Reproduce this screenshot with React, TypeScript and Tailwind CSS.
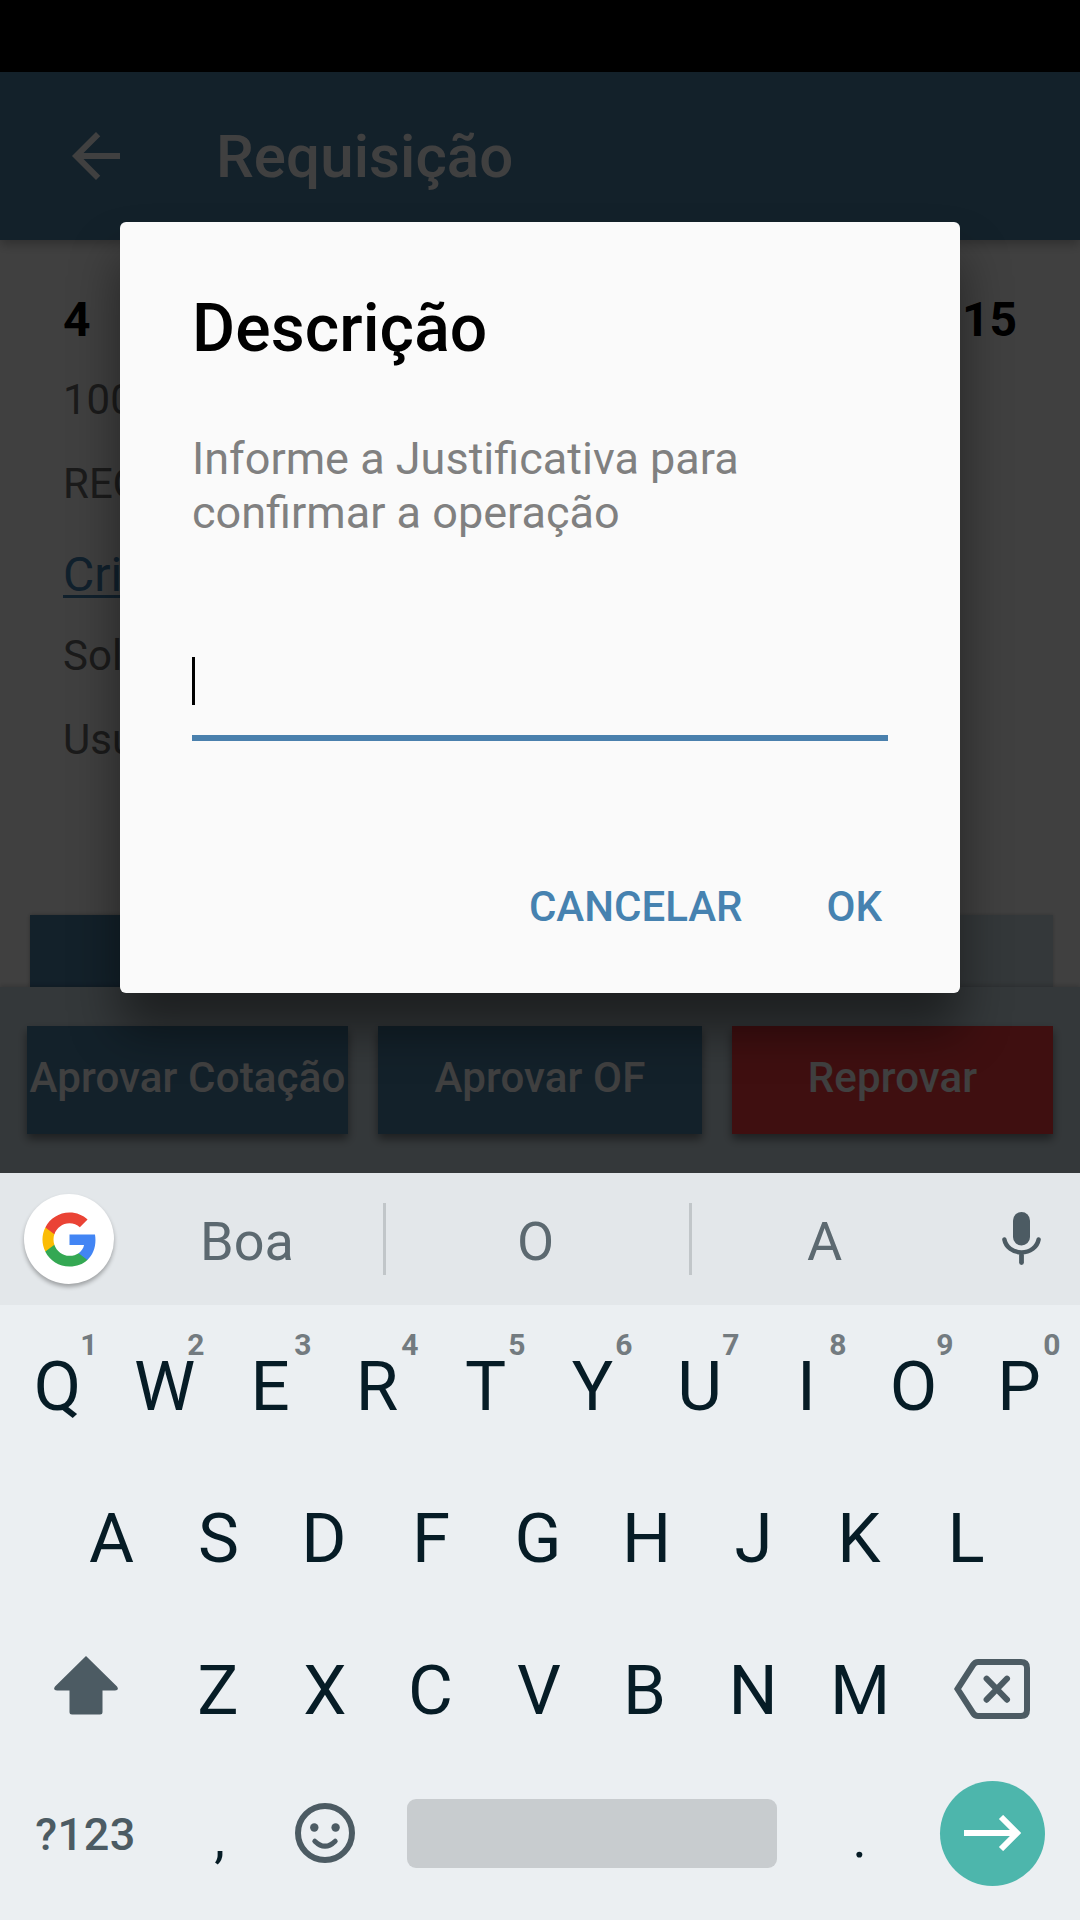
import React from 'react';
import clsx from 'clsx';

const topRow = ['Q', 'W', 'E', 'R', 'T', 'Y', 'U', 'I', 'O', 'P'];
const homeRow = ['A', 'S', 'D', 'F', 'G', 'H', 'J', 'K', 'L'];
const bottomRow = ['Z', 'X', 'C', 'V', 'B', 'N', 'M'];

// Letters with a heavier left bearing sit slightly off centre
const nudged = 'ERDFKLPBCG';

function Key({ label, hint }: { label: string; hint?: string }) {
  return (
    <div
      className={clsx(
        'relative flex h-[152px] w-[107px] shrink-0 items-center justify-center text-[69px] leading-none text-[#061c26]',
        nudged.includes(label) ? 'pr-[4px]' : 'pr-px'
      )}
    >
      {label}
      {hint && (
        <span className="absolute right-[14px] top-[24px] text-[30px] font-bold leading-[22px] text-[#737b80]">
          {hint}
        </span>
      )}
    </div>
  );
}

function GoogleLogo() {
  return (
    <svg width="59" height="59" viewBox="0 0 24 24">
      <path fill="#4285F4" d="M22.56 12.25c0-.78-.07-1.53-.2-2.25H12v4.26h5.92c-.26 1.37-1.04 2.53-2.21 3.31v2.77h3.57c2.08-1.92 3.28-4.74 3.28-8.09z" />
      <path fill="#34A853" d="M12 23c2.97 0 5.46-.98 7.28-2.66l-3.57-2.77c-.98.66-2.23 1.06-3.71 1.06-2.86 0-5.29-1.93-6.16-4.53H2.18v2.84C3.99 20.53 7.7 23 12 23z" />
      <path fill="#FBBC05" d="M5.84 14.09c-.22-.66-.35-1.36-.35-2.09s.13-1.43.35-2.09V7.07H2.18C1.43 8.55 1 10.22 1 12s.43 3.45 1.18 4.93l2.85-2.22.81-.62z" />
      <path fill="#EA4335" d="M12 5.38c1.62 0 3.06.56 4.21 1.64l3.15-3.15C17.45 2.09 14.97 1 12 1 7.7 1 3.99 3.47 2.18 7.07l3.66 2.84c.87-2.6 3.3-4.53 6.16-4.53z" />
    </svg>
  );
}

function RequisitionPage() {
  return (
    <div className="flex h-full flex-col bg-white">
      <div className="h-[72px] shrink-0 bg-black" />

      {/* App bar */}
      <header className="z-10 flex h-[168px] shrink-0 items-center bg-[#4c82a8] pl-[60px] text-white shadow-[0_5px_10px_rgba(0,0,0,0.25)]">
        <svg width="72" height="72" viewBox="0 0 24 24" fill="currentColor">
          <path d="M20 11H7.83l5.59-5.59L12 4l-8 8 8 8 1.41-1.41L7.83 13H20v-2z" />
        </svg>
        <h1 className="ml-[84px] pt-[2px] text-[60px] font-medium leading-none tracking-[0.1px]">Requisição</h1>
      </header>

      {/* Requisition details */}
      <main className="flex-1 px-[63px] pt-[50px] text-[42px] text-[#6e6e6e]">
        <div className="mb-2 flex h-[60px] items-center justify-between text-[48px] font-bold text-black">
          <span>4</span>
          <span>15</span>
        </div>
        <p className="leading-[84px]">100</p>
        <p className="leading-[84px]">REQ</p>
        <p className="text-[48px] leading-[98px] text-[#4682b4] underline decoration-[3px] underline-offset-[4px]">Cri</p>
        <p className="leading-[63px]">Sol</p>
        <p className="leading-[105px]">Usu</p>
      </main>

      <div className="mx-[27px] flex h-[72px] shrink-0 pl-[3px]">
        <div className="flex-1 bg-[#4c82a8] shadow-[0_0_4px_rgba(0,0,0,0.3)]" />
        <div className="flex-1 bg-[#d0dde5] shadow-[0_0_4px_rgba(0,0,0,0.2)]" />
      </div>

      {/* Actions */}
      <footer className="flex h-[186px] shrink-0 gap-[30px] bg-[#d0dfe7] px-[27px] pt-[39px] text-[42px] font-medium tracking-[0.15px] text-white shadow-[0_-2px_4px_rgba(0,0,0,0.15)]">
        <div className="flex h-[108px] w-[321px] items-center justify-center whitespace-nowrap bg-[#4c82a8] pb-1.5 shadow-[0_5px_9px_rgba(0,0,0,0.45)]">
          Aprovar Cotação
        </div>
        <div className="flex h-[108px] w-[324px] items-center justify-center bg-[#4c82a8] pb-1.5 shadow-[0_5px_9px_rgba(0,0,0,0.45)]">
          Aprovar OF
        </div>
        <div className="flex h-[108px] w-[321px] items-center justify-center bg-[#fa3e42] pb-1.5 shadow-[0_5px_9px_rgba(0,0,0,0.45)]">
          Reprovar
        </div>
      </footer>
    </div>
  );
}

function JustificationDialog() {
  return (
    <div className="absolute left-[120px] top-[222px] flex h-[771px] w-[840px] flex-col rounded-md bg-[#fafafa] px-[72px] pt-[66px] shadow-[0_36px_50px_rgba(0,0,0,0.45)]">
      <h2 className="text-[66px] font-medium leading-[81px] tracking-[0.1px] text-black">Descrição</h2>
      <p className="mt-[63px] text-[45px] leading-[54px] text-[#808080]">
        Informe a Justificativa para confirmar a operação
      </p>
      <div className="mt-[117px] h-[84px] border-b-[6px] border-[#4a80ad]">
        <div className="h-12 w-[3px] bg-black" />
      </div>
      <div className="mt-[141px] flex justify-end gap-[84px] pr-[6px] text-[42px] font-medium leading-[50px] text-[#4682b0]">
        <span>CANCELAR</span>
        <span>OK</span>
      </div>
    </div>
  );
}

function Keyboard() {
  return (
    <div className="h-[747px] bg-[#ebeff2]">
      {/* Suggestions */}
      <div className="flex h-[132px] items-center bg-[#e3e7ea] text-[54px] leading-[60px] text-[#5c6970]">
        <div className="w-[111px] pl-6">
          <div className="flex h-[90px] w-[90px] items-center justify-center rounded-full bg-white shadow-[0_3px_4px_rgba(0,0,0,0.3)]">
            <GoogleLogo />
          </div>
        </div>
        <div className="w-[272px] pt-[5px] text-center">Boa</div>
        <div className="h-[72px] w-[3px] bg-[#c1c6c9]" />
        <div className="w-[303px] pr-[4px] pt-[5px] text-center">O</div>
        <div className="h-[72px] w-[3px] bg-[#c1c6c9]" />
        <div className="w-[265px] pt-[5px] text-center">A</div>
        <div className="flex flex-1 justify-center pb-0.5 pl-1.5">
          <svg width="39" height="53" viewBox="0 0 39 53" fill="none" stroke="#4c5b63" strokeLinecap="round">
            <rect x="11" y="0" width="17" height="33.5" rx="8.5" fill="#4c5b63" stroke="none" />
            <path d="M2.4 27.5a17.3 15.2 0 0 0 34.2 0" strokeWidth="4.4" />
            <path d="M19.5 43v7.5" strokeWidth="4.8" />
          </svg>
        </div>
      </div>

      {/* Letters */}
      <div className="flex justify-center pr-px pt-[5px]">
        {topRow.map((k, i) => (
          <Key key={k} label={k} hint={String((i + 1) % 10)} />
        ))}
      </div>
      <div className="flex justify-center">
        {homeRow.map((k) => (
          <Key key={k} label={k} />
        ))}
      </div>
      <div className="flex items-center">
        <div className="flex w-[165px] justify-center pb-[9px] pl-[7px]">
          <svg width="64" height="59" viewBox="0 0 64 59" fill="#4c5b63">
            <path d="M32 0L63 30.5q2.500 4-2 4H48.500V56q0 2.500-2.500 2.500H18q-2.500 0-2.500-2.500V34.500H3q-4.500 0-2-4z" />
          </svg>
        </div>
        {bottomRow.map((k) => (
          <Key key={k} label={k} />
        ))}
        <div className="flex flex-1 justify-center pb-0.5 pr-[10px]">
          <svg width="76" height="60" viewBox="0 0 76 60" fill="none" stroke="#4c5b63" strokeWidth="6">
            <path d="M3.500 30L19 6q2-3 5-3h43q6 0 6 6v42q0 6-6 6H24q-3 0-5-3z" />
            <path d="M32.600 19.700l20.400 21M53 19.700l-20.400 21" strokeLinecap="round" />
          </svg>
        </div>
      </div>

      <div className="flex h-[134px] items-center leading-none">
        <div className="w-[165px] pl-[6px] pt-[3px] text-center text-[45px] font-medium tracking-[0.5px] text-[#4c5b63]">?123</div>
        <div className="w-[107px] pl-[2px] pt-[11px] text-center text-[54px] text-[#061c26]">,</div>
        <div className="flex w-[107px] justify-center pr-[2px]">
          <svg width="60" height="60" viewBox="0 0 60 60" fill="none" stroke="#4c5b63">
            <circle cx="30" cy="30" r="27" strokeWidth="6" />
            <circle cx="19.300" cy="24.500" r="4.200" fill="#4c5b63" stroke="none" />
            <circle cx="40.600" cy="24.500" r="4.200" fill="#4c5b63" stroke="none" />
            <path d="M19.800 38.200q10.200 10 20.400 0" strokeWidth="5" strokeLinecap="round" />
          </svg>
        </div>
        <div className="mx-7 h-[69px] w-[370px] rounded-[9px] bg-[#c8cccf]" />
        <div className="w-[107px] pl-[2px] pt-[11px] text-center text-[54px] text-[#061c26]">.</div>
        <div className="flex flex-1 justify-center pr-[7px]">
          <div className="flex h-[105px] w-[105px] items-center justify-center rounded-full bg-[#4db6ac]">
            <svg width="57" height="36" viewBox="0 0 57 36" fill="none" stroke="#fff" strokeWidth="6">
              <path d="M0 18h53M37 2l16 16-16 16" />
            </svg>
          </div>
        </div>
      </div>
    </div>
  );
}

export default function App() {
  return (
    <div className="h-[1920px] w-[1080px] overflow-hidden font-['Roboto',sans-serif]">
      <div className="relative h-[1173px] overflow-hidden">
        <RequisitionPage />
        <div className="absolute inset-0 z-20 bg-black/75">
          <JustificationDialog />
        </div>
      </div>
      <Keyboard />
    </div>
  );
}
